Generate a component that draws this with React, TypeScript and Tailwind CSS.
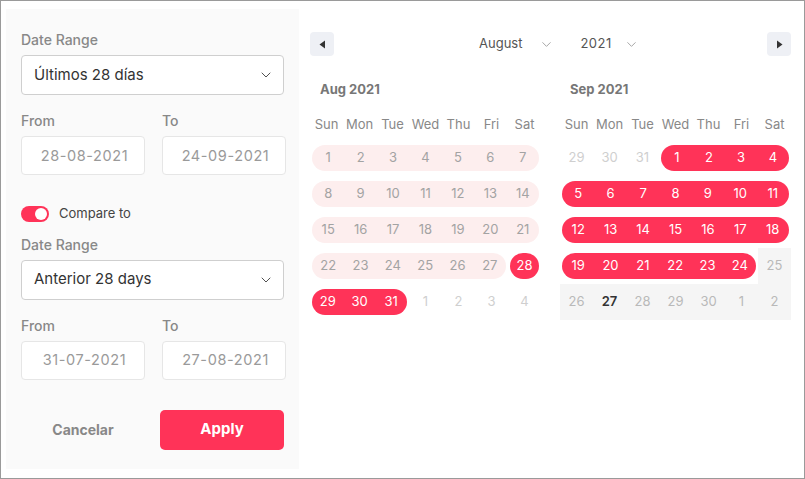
import React from 'react';
import { ChevronDown } from 'lucide-react';

type Tone = 'pink' | 'red' | 'muted' | 'plain' | 'today';
type Seg = { days: (number | string)[]; tone: Tone };

const weekdays = ['Sun', 'Mon', 'Tue', 'Wed', 'Thu', 'Fri', 'Sat'];

const august: Seg[][] = [
  [{ days: [1, 2, 3, 4, 5, 6, 7], tone: 'pink' }],
  [{ days: [8, 9, 10, 11, 12, 13, 14], tone: 'pink' }],
  [{ days: [15, 16, 17, 18, 19, 20, 21], tone: 'pink' }],
  [
    { days: [22, 23, 24, 25, 26, 27], tone: 'pink' },
    { days: [28], tone: 'red' },
  ],
  [
    { days: [29, 30, 31], tone: 'red' },
    { days: [1, 2, 3, 4], tone: 'muted' },
  ],
];

const september: Seg[][] = [
  [
    { days: [29, 30, 31], tone: 'muted' },
    { days: [1, 2, 3, 4], tone: 'red' },
  ],
  [{ days: [5, 6, 7, 8, 9, 10, 11], tone: 'red' }],
  [{ days: [12, 13, 14, 15, 16, 17, 18], tone: 'red' }],
  [
    { days: [19, 20, 21, 22, 23, 24], tone: 'red' },
    { days: [25], tone: 'plain' },
  ],
  [
    { days: [26], tone: 'plain' },
    { days: [27], tone: 'today' },
    { days: [28, 29, 30, 1, 2], tone: 'plain' },
  ],
];

const segStyle: Record<Tone, string> = {
  pink: 'bg-[#fdeeee] text-[#a3a3a3] rounded-full mx-[2px]',
  red: 'bg-[#ff3358] text-white rounded-full mx-[2px]',
  muted: 'text-[#cfcfcf]',
  plain: 'bg-[#f5f5f5] text-[#b9b9b9] h-[36px]',
  today: 'bg-[#f5f5f5] text-[#333] font-semibold h-[36px]',
};

function Month({ title, weeks }: { title: string; weeks: Seg[][] }) {
  return (
    <div className="w-[231px]">
      <div className="pl-[10px] h-[20px] leading-[20px] text-[13px] font-bold text-[#777]">{title}</div>
      <div className="mt-[16px] flex h-[20px] items-center">
        {weekdays.map((d) => (
          <div key={d} className="w-[33px] text-center text-[13px] text-[#888]">
            {d}
          </div>
        ))}
      </div>
      <div className="mt-[5px]">
        {weeks.map((week, i) => (
          <div key={i} className="flex h-[36px] items-center">
            {week.map((seg, j) => {
              const inset = seg.tone === 'pink' || seg.tone === 'red';
              return (
                <div
                  key={j}
                  className={`flex items-center h-[26px] ${segStyle[seg.tone]}`}
                  style={{ width: seg.days.length * 33 - (inset ? 4 : 0) }}
                >
                  {seg.days.map((d, k) => (
                    <div key={k} className="flex-1 text-center text-[13px]">
                      {d}
                    </div>
                  ))}
                </div>
              );
            })}
          </div>
        ))}
      </div>
    </div>
  );
}

function SelectBox({ value }: { value: string }) {
  return (
    <div className="mt-[5px] flex h-[40px] w-[263px] items-center justify-between rounded-[4px] border border-[#cfcfcf] bg-white pl-[12px] pr-[9px]">
      <span className="text-[15px] text-[#333]">{value}</span>
      <ChevronDown className="h-[16px] w-[16px] text-[#444]" strokeWidth={1.4} />
    </div>
  );
}

function DateInputs({ from, to }: { from: string; to: string }) {
  return (
    <div className="flex gap-[17px]">
      {[
        ['From', from],
        ['To', to],
      ].map(([label, value]) => (
        <div key={label} className="w-[124px]">
          <div className="h-[20px] leading-[20px] text-[14px] font-medium text-[#888]">{label}</div>
          <div className="mt-[5px] flex h-[39px] items-center justify-center rounded-[4px] border border-[#e6e6e6] bg-white pl-[3px] text-[14.5px] tracking-[0.6px] text-[#9a9a9a]">
            {value}
          </div>
        </div>
      ))}
    </div>
  );
}

export default function App() {
  return (
    <div
      className="flex h-[479px] w-[805px] border border-[#9a9a9a] bg-white"
      style={{ fontFamily: 'Inter, "Noto Sans", sans-serif' }}
    >
      {/* Left panel */}
      <div className="ml-[5px] mt-[8px] h-[460px] w-[293px] bg-[#fafafa] pl-[15px] pt-[21px]">
        <div className="h-[20px] leading-[20px] text-[14px] font-medium text-[#888]">Date Range</div>
        <SelectBox value="Últimos 28 días" />
        <div className="mt-[16px]">
          <DateInputs from="28-08-2021" to="24-09-2021" />
        </div>

        <div className="mt-[29px] flex items-center">
          <div className="flex h-[16px] w-[28px] items-center justify-end rounded-full bg-[#ff3358] pr-[2px]">
            <div className="h-[12px] w-[12px] rounded-full bg-white" />
          </div>
          <span className="ml-[10px] text-[13px] text-[#444]">Compare to</span>
        </div>

        <div className="mt-[11px] h-[20px] leading-[20px] text-[14px] font-medium text-[#888]">Date Range</div>
        <SelectBox value="Anterior 28 days" />
        <div className="mt-[16px]">
          <DateInputs from="31-07-2021" to="27-08-2021" />
        </div>

        <div className="mt-[30px] flex items-center">
          <div className="w-[124px] text-center text-[14px] font-bold text-[#888]">Cancelar</div>
          <div className="ml-[15px] flex h-[40px] w-[124px] items-center justify-center rounded-[5px] bg-[#ff3358] text-[15px] font-bold text-white">
            Apply
          </div>
        </div>
      </div>

      {/* Calendar */}
      <div className="flex-1 pl-[11px] pr-[13px] pt-[31px]">
        <div className="flex h-[24px] items-center">
          <div className="flex h-[24px] w-[24px] items-center justify-center rounded-[4px] bg-[#eef0f5]">
            <svg width="7" height="9" viewBox="0 0 7 9">
              <path d="M6 0.5 L0.5 4.5 L6 8.5 Z" fill="#333" />
            </svg>
          </div>
          <div className="ml-[145px] flex items-center text-[13px] text-[#555]">
            <span>August</span>
            <ChevronDown className="ml-[17px] h-[15px] w-[15px] text-[#999]" strokeWidth={1.4} />
            <span className="ml-[26px] tracking-[0.5px]">2021</span>
            <ChevronDown className="ml-[12px] h-[15px] w-[15px] text-[#999]" strokeWidth={1.4} />
          </div>
          <div className="ml-auto flex h-[24px] w-[24px] items-center justify-center rounded-[4px] bg-[#eef0f5]">
            <svg width="7" height="9" viewBox="0 0 7 9">
              <path d="M1 0.5 L6.5 4.5 L1 8.5 Z" fill="#333" />
            </svg>
          </div>
        </div>

        <div className="mt-[23px] flex gap-[19px]">
          <Month title="Aug 2021" weeks={august} />
          <Month title="Sep 2021" weeks={september} />
        </div>
      </div>
    </div>
  );
}
